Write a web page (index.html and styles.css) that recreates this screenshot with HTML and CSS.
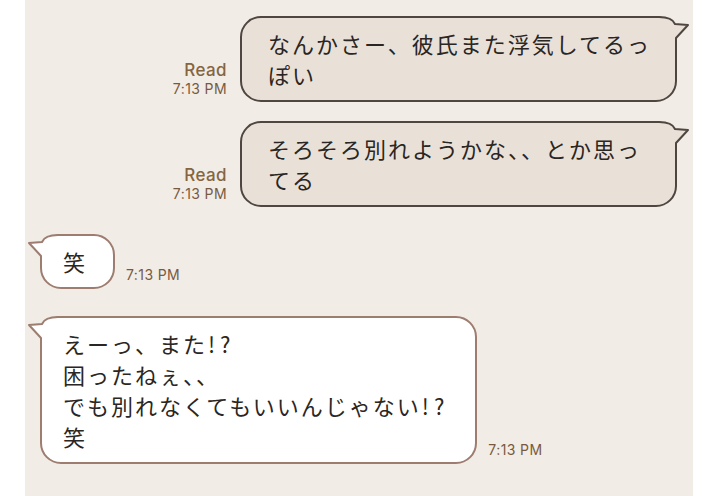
FILE: index.html
```html
<!DOCTYPE html>
<html lang="ja">
<head>
<meta charset="utf-8">
<link rel="stylesheet" href="styles.css">
</head>
<body>
<div class="chat">
  <div class="row sent">
    <div class="meta"><div class="read">Read</div><div class="time">7:13 PM</div></div>
    <div class="bubble">なんかさー、彼氏また浮気してるっぽい<svg class="tail" width="36" height="34" viewBox="0 0 36 34"><path class="tf" d="M0,1 L4,1 Q17,1 20,8 L33,9 L21,22 L21,34 L0,34 Z"/><path class="ts" d="M0,1 L4,1 Q17,1 20,8 L33,9 L21,22 L21,34"/></svg></div>
  </div>
  <div class="row sent">
    <div class="meta"><div class="read">Read</div><div class="time">7:13 PM</div></div>
    <div class="bubble">そろそろ別れようかな、、とか思ってる<svg class="tail" width="36" height="34" viewBox="0 0 36 34"><path class="tf" d="M0,1 L4,1 Q17,1 20,8 L33,9 L21,22 L21,34 L0,34 Z"/><path class="ts" d="M0,1 L4,1 Q17,1 20,8 L33,9 L21,22 L21,34"/></svg></div>
  </div>
  <div class="row recv first">
    <div class="bubble">笑<svg class="tail" width="36" height="34" viewBox="0 0 36 34"><path class="tf" d="M0,1 L4,1 Q17,1 20,8 L33,9 L21,22 L21,34 L0,34 Z"/><path class="ts" d="M0,1 L4,1 Q17,1 20,8 L33,9 L21,22 L21,34"/></svg></div>
    <div class="meta"><div class="time">7:13 PM</div></div>
  </div>
  <div class="row recv">
    <div class="bubble">えーっ、また<span class="ex">!?</span><br>困ったねぇ、、<br>でも別れなくてもいいんじゃない<span class="ex">!?</span><br>笑<svg class="tail" width="36" height="34" viewBox="0 0 36 34"><path class="tf" d="M0,1 L4,1 Q17,1 20,8 L33,9 L21,22 L21,34 L0,34 Z"/><path class="ts" d="M0,1 L4,1 Q17,1 20,8 L33,9 L21,22 L21,34"/></svg></div>
    <div class="meta"><div class="time">7:13 PM</div></div>
  </div>
</div>
</body>
</html>
```
FILE: styles.css
```css
html, body {
  margin: 0;
  padding: 0;
  background: #ffffff;
}
.chat {
  margin-left: 25px;
  width: 668px;
  height: 496px;
  box-sizing: border-box;
  background: #f1ece6;
  padding-top: 16px;
  display: flex;
  flex-direction: column;
  overflow: hidden;
}
.row {
  display: flex;
  align-items: flex-end;
}
.row.sent {
  justify-content: flex-end;
  padding-right: 16px;
  gap: 13px;
  margin-bottom: 19px;
}
.row.recv {
  justify-content: flex-start;
  padding-left: 15px;
  gap: 11px;
  margin-bottom: 27px;
}
.row.recv.first {
  margin-top: 8px;
}
.bubble {
  position: relative;
  box-sizing: border-box;
  border: 2px solid;
  border-radius: 21px;
  font-family: "Noto Sans CJK JP", sans-serif;
  font-size: 22px;
  line-height: 31px;
  letter-spacing: 2px;
  color: #2a2623;
}
.ex {
  letter-spacing: 5px;
  margin-left: 1px;
}
.sent .bubble {
  max-width: 437px;
  padding: 10px 22px 10px 26px;
  background: #e9e1d8;
  border-color: #4f4641;
}
.recv .bubble {
  padding: 10px 26px 10px 21px;
  background: #ffffff;
  border-color: #9d7d70;
}
.tail {
  position: absolute;
  top: -2px;
}
.sent .tail {
  right: -16px;
}
.recv .tail {
  left: -16px;
  transform: scaleX(-1);
}
.tail .ts {
  fill: none;
  stroke-width: 2;
  stroke-linejoin: round;
  stroke-linecap: round;
}
.tail .tf {
  stroke: none;
}
.sent .tail .tf { fill: #e9e1d8; }
.sent .tail .ts { stroke: #4f4641; }
.recv .tail .tf { fill: #ffffff; }
.recv .tail .ts { stroke: #9d7d70; }
.meta {
  font-family: "Inter", "Liberation Sans", sans-serif;
  text-align: right;
  color: #795a40;
  margin-bottom: 5px;
}
.recv .meta {
  margin-bottom: 6px;
}
.read {
  font-size: 17px;
  line-height: 19px;
  letter-spacing: 0.4px;
  font-weight: 500;
  color: #85653f;
}
.time {
  font-size: 14px;
  line-height: 17px;
  letter-spacing: 0.4px;
}
```
